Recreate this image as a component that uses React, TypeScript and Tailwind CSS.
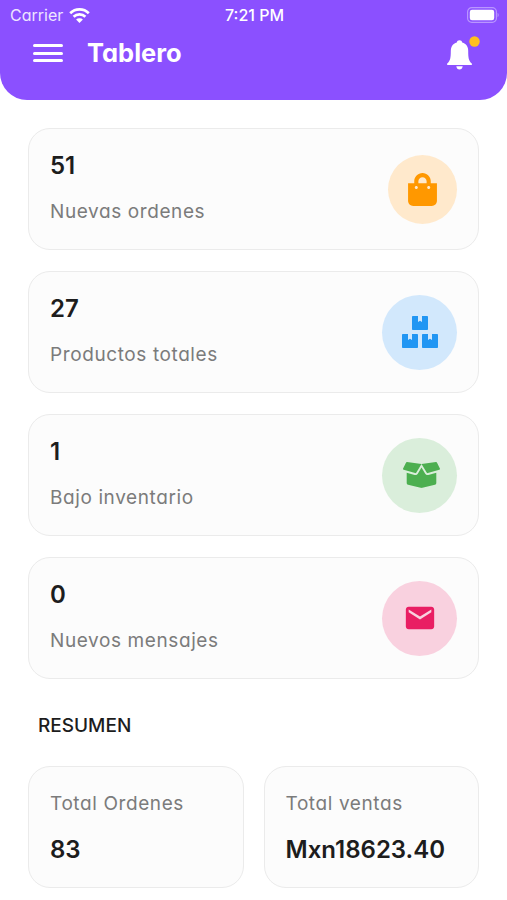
import React from "react";
import { FaShoppingBag, FaBoxes, FaBoxOpen } from "react-icons/fa";
import { MdEmail } from "react-icons/md";

type Stat = {
  value: string;
  label: string;
  tracking: string;
  circle: string;
  icon: React.ReactNode;
};

const stats: Stat[] = [
  {
    value: "51",
    label: "Nuevas ordenes",
    tracking: "tracking-[0.6px]",
    circle: "size-[69px] bg-[#ffe9cc] text-[#ff9800]",
    icon: <FaShoppingBag className="h-[33px] w-[29px]" />,
  },
  {
    value: "27",
    label: "Productos totales",
    tracking: "tracking-[0.6px]",
    circle: "size-[75px] bg-[#d2e8fc] text-[#2196f3]",
    icon: <FaBoxes className="h-[32px] w-[36px]" />,
  },
  {
    value: "1",
    label: "Bajo inventario",
    tracking: "tracking-[0.6px]",
    circle: "size-[75px] bg-[#daeedb] text-[#4caf50]",
    icon: <FaBoxOpen className="ml-1 h-[30px] w-[37px]" />,
  },
  {
    value: "0",
    label: "Nuevos mensajes",
    tracking: "tracking-[0.6px]",
    circle: "size-[75px] bg-[#f9d1df] text-[#e91e63]",
    icon: <MdEmail className="size-[34px]" />,
  },
];

function StatusBar() {
  return (
    <div className="grid h-[30px] grid-cols-3 items-center pl-[10px] pr-[8px] text-[16px] leading-[30px] text-white">
      <div className="flex items-center gap-[6px]">
        <span className="opacity-85">Carrier</span>
        <svg width="21" height="15" viewBox="0 0 21 15" fill="none" stroke="white" strokeWidth="2.7">
          <path d="M1.2 5.2a13.2 13.2 0 0 1 18.6 0" />
          <path d="M4.6 8.7a8.4 8.4 0 0 1 11.8 0" />
          <path d="M10.5 15 7.1 11.6a4.8 4.8 0 0 1 6.8 0Z" fill="white" stroke="none" />
        </svg>
      </div>
      <span className="text-center font-medium">7:21 PM</span>
      <svg className="justify-self-end" width="32" height="16" viewBox="0 0 32 16">
        <rect x="0.6" y="0.6" width="28.8" height="14.8" rx="4.2" fill="none" stroke="white" strokeOpacity="0.4" strokeWidth="1.2" />
        <rect x="2.8" y="2.8" width="24.4" height="10.4" rx="2.2" fill="white" />
        <path d="M30.6 5.8c1.4.7 1.4 3.7 0 4.4Z" fill="white" fillOpacity="0.45" />
      </svg>
    </div>
  );
}

function Header() {
  return (
    <header className="h-[100px] rounded-b-[27px] bg-[#8b50ff]">
      <StatusBar />
      <div className="flex h-[46px] items-center pl-[33px] pr-[27px]">
        <div className="flex w-[30px] flex-col gap-[4.5px]">
          <span className="h-[3px] rounded-sm bg-white" />
          <span className="h-[3px] rounded-sm bg-white" />
          <span className="h-[3px] rounded-sm bg-white" />
        </div>
        <h1 className="ml-[24px] text-[25.5px] leading-[46px] font-bold text-white">Tablero</h1>
        <svg className="ml-auto" width="33" height="34" viewBox="0 0 33 34">
          <path d="M12.5 4.2c1.5 0 2.4.9 2.7 2.2 4 1 6 4.3 6 8.6 0 6.500.4 9.900 3.500 12.400.7.600.4 1.600-.5 1.600H.8c-.9 0-1.200-1-.5-1.600C3.400 24.900 3.800 21.500 3.800 15c0-4.300 2-7.600 6-8.600.3-1.300 1.200-2.200 2.700-2.200Z" fill="white" />
          <path d="M9.300 30.200h6.400c-.2 2-1.500 3.300-3.200 3.300s-3-1.300-3.200-3.300Z" fill="white" />
          <circle cx="27.500" cy="5.500" r="5.200" fill="#ffc01e" />
        </svg>
      </div>
    </header>
  );
}

export default function App() {
  return (
    <div className="h-[900px] w-full overflow-hidden bg-white font-[Inter,'Liberation_Sans',sans-serif] [font-feature-settings:'cv11']">
      <Header />
      <main className="px-[28px] pt-[28px]">
        <section className="flex flex-col gap-[21px]">
          {stats.map((s) => (
            <div
              key={s.label}
              className="flex h-[122px] items-center justify-between rounded-[22px] border border-[#ebebeb] bg-[#fcfcfc] px-[21px]"
            >
              <div className="flex flex-col gap-[16px]">
                <span className="text-[24px] leading-[30px] font-semibold text-[#1d1d1d]">{s.value}</span>
                <span className={`text-[19px] leading-[30px] text-[#7b7b7b] ${s.tracking}`}>{s.label}</span>
              </div>
              <div className={`flex items-center justify-center rounded-full ${s.circle}`}>{s.icon}</div>
            </div>
          ))}
        </section>
        <h2 className="mt-[32px] ml-[10px] text-[19px] leading-[30px] font-medium text-[#1d1d1d]">RESUMEN</h2>
        <section className="mt-[25px] grid grid-cols-2 gap-[20px]">
          <div className="flex h-[122px] flex-col justify-center gap-[16px] rounded-[22px] border border-[#ebebeb] bg-[#fcfcfc] px-[21px]">
            <span className="text-[19px] leading-[30px] tracking-[0.6px] text-[#7b7b7b]">Total Ordenes</span>
            <span className="text-[24px] leading-[30px] font-semibold text-[#1d1d1d]">83</span>
          </div>
          <div className="flex h-[122px] flex-col justify-center gap-[16px] rounded-[22px] border border-[#ebebeb] bg-[#fcfcfc] px-[21px]">
            <span className="text-[19px] leading-[30px] tracking-[0.6px] text-[#7b7b7b]">Total ventas</span>
            <span className="text-[24px] leading-[30px] font-semibold text-[#1d1d1d]">Mxn18623.40</span>
          </div>
        </section>
      </main>
    </div>
  );
}
